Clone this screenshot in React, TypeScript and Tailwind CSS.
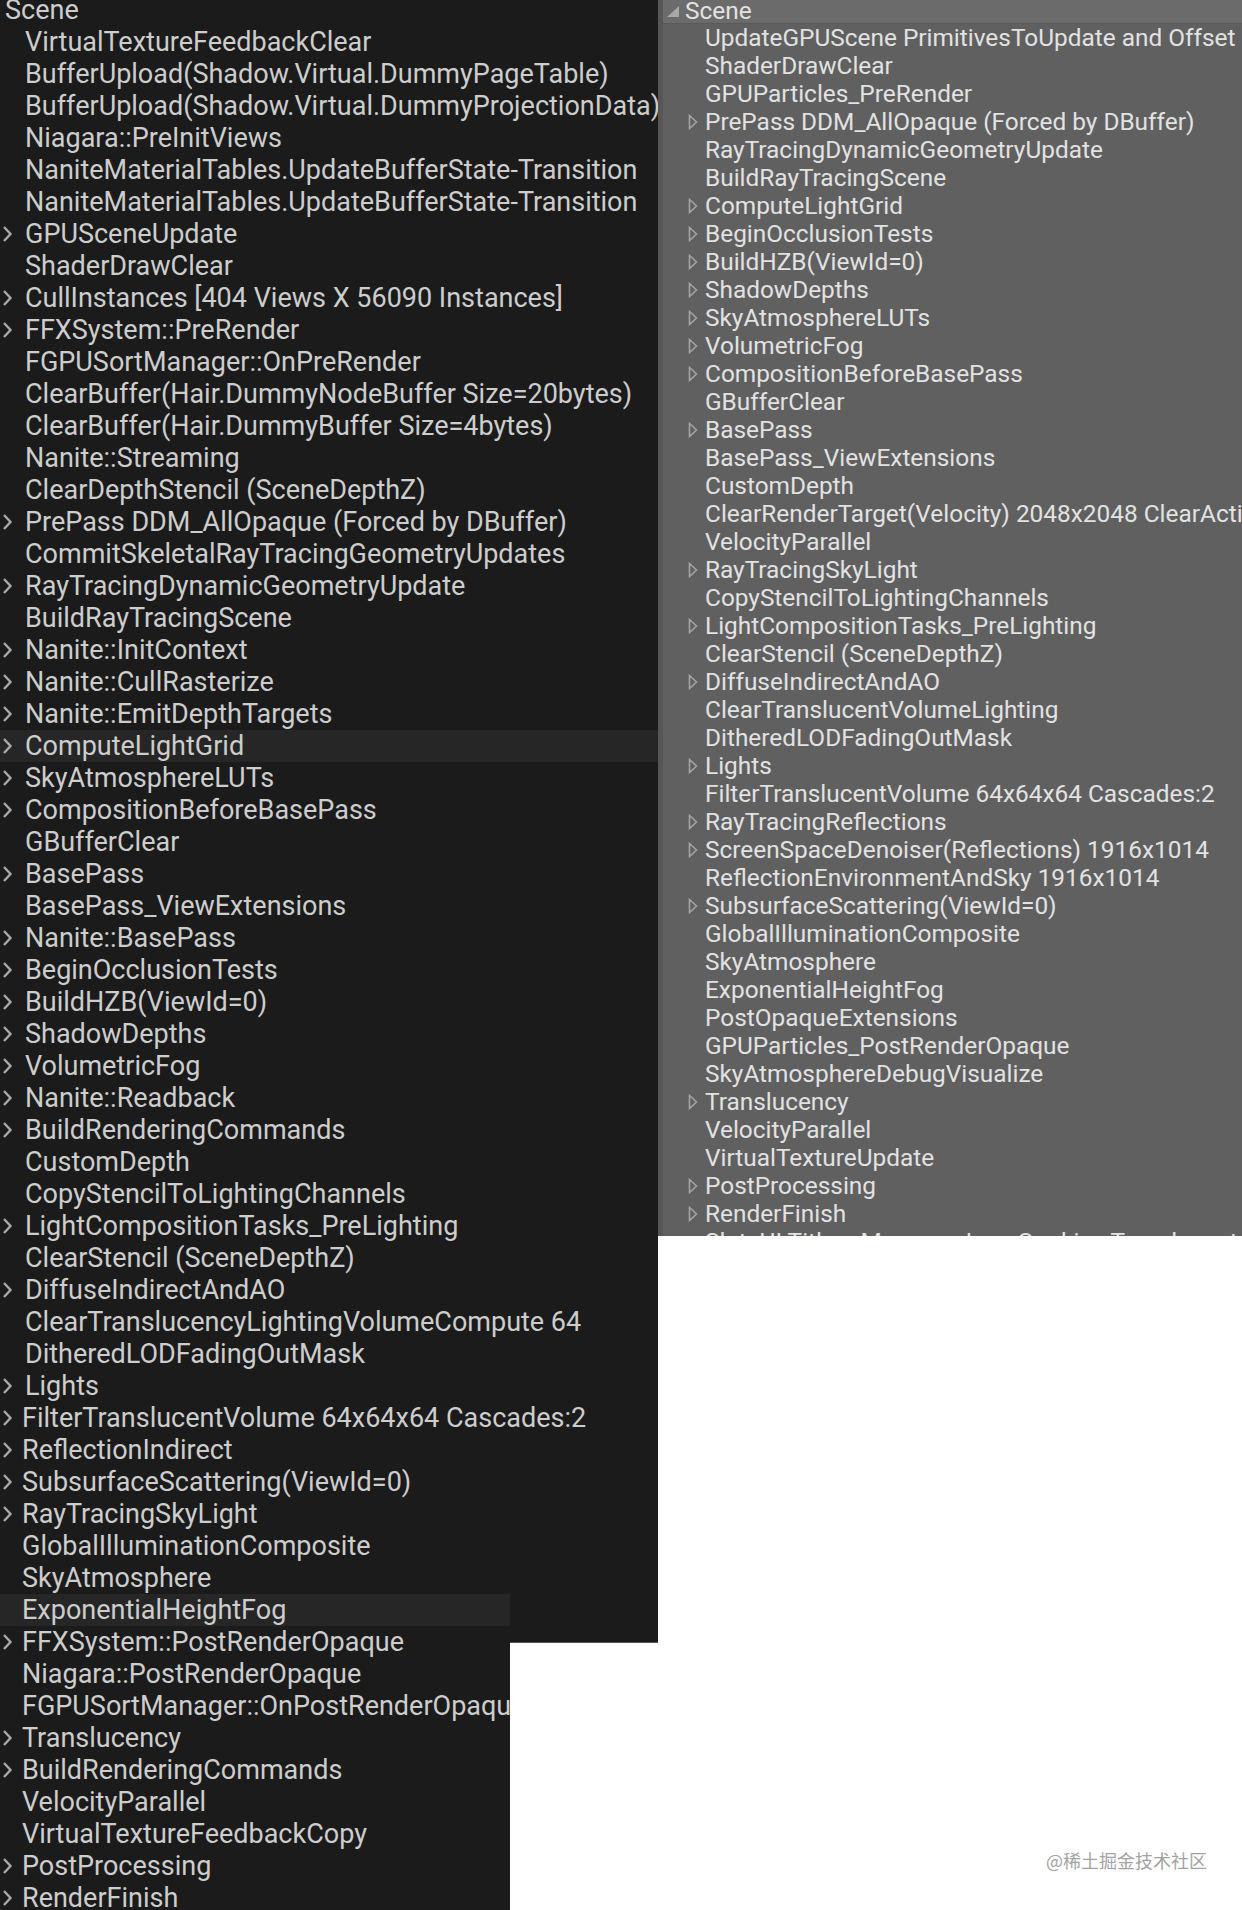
import React from "react";

type Row = { label: string; expand?: boolean };

const leftRows: Row[] = [
  { label: "VirtualTextureFeedbackClear" },
  { label: "BufferUpload(Shadow.Virtual.DummyPageTable)" },
  { label: "BufferUpload(Shadow.Virtual.DummyProjectionData)" },
  { label: "Niagara::PreInitViews" },
  { label: "NaniteMaterialTables.UpdateBufferState-Transition" },
  { label: "NaniteMaterialTables.UpdateBufferState-Transition" },
  { label: "GPUSceneUpdate", expand: true },
  { label: "ShaderDrawClear" },
  { label: "CullInstances [404 Views X 56090 Instances]", expand: true },
  { label: "FFXSystem::PreRender", expand: true },
  { label: "FGPUSortManager::OnPreRender" },
  { label: "ClearBuffer(Hair.DummyNodeBuffer Size=20bytes)" },
  { label: "ClearBuffer(Hair.DummyBuffer Size=4bytes)" },
  { label: "Nanite::Streaming" },
  { label: "ClearDepthStencil (SceneDepthZ)" },
  { label: "PrePass DDM_AllOpaque (Forced by DBuffer)", expand: true },
  { label: "CommitSkeletalRayTracingGeometryUpdates" },
  { label: "RayTracingDynamicGeometryUpdate", expand: true },
  { label: "BuildRayTracingScene" },
  { label: "Nanite::InitContext", expand: true },
  { label: "Nanite::CullRasterize", expand: true },
  { label: "Nanite::EmitDepthTargets", expand: true },
  { label: "ComputeLightGrid", expand: true },
  { label: "SkyAtmosphereLUTs", expand: true },
  { label: "CompositionBeforeBasePass", expand: true },
  { label: "GBufferClear" },
  { label: "BasePass", expand: true },
  { label: "BasePass_ViewExtensions" },
  { label: "Nanite::BasePass", expand: true },
  { label: "BeginOcclusionTests", expand: true },
  { label: "BuildHZB(ViewId=0)", expand: true },
  { label: "ShadowDepths", expand: true },
  { label: "VolumetricFog", expand: true },
  { label: "Nanite::Readback", expand: true },
  { label: "BuildRenderingCommands", expand: true },
  { label: "CustomDepth" },
  { label: "CopyStencilToLightingChannels" },
  { label: "LightCompositionTasks_PreLighting", expand: true },
  { label: "ClearStencil (SceneDepthZ)" },
  { label: "DiffuseIndirectAndAO", expand: true },
  { label: "ClearTranslucencyLightingVolumeCompute 64" },
  { label: "DitheredLODFadingOutMask" },
  { label: "Lights", expand: true },
  { label: "FilterTranslucentVolume 64x64x64 Cascades:2", expand: true },
  { label: "ReflectionIndirect", expand: true },
  { label: "SubsurfaceScattering(ViewId=0)", expand: true },
  { label: "RayTracingSkyLight", expand: true },
  { label: "GlobalIlluminationComposite" },
  { label: "SkyAtmosphere" },
];

const leftTail: Row[] = [
  { label: "ExponentialHeightFog" },
  { label: "FFXSystem::PostRenderOpaque", expand: true },
  { label: "Niagara::PostRenderOpaque" },
  { label: "FGPUSortManager::OnPostRenderOpaque" },
  { label: "Translucency", expand: true },
  { label: "BuildRenderingCommands", expand: true },
  { label: "VelocityParallel" },
  { label: "VirtualTextureFeedbackCopy" },
  { label: "PostProcessing", expand: true },
  { label: "RenderFinish", expand: true },
];

const rightRows: Row[] = [
  { label: "UpdateGPUScene PrimitivesToUpdate and Offset" },
  { label: "ShaderDrawClear" },
  { label: "GPUParticles_PreRender" },
  { label: "PrePass DDM_AllOpaque (Forced by DBuffer)", expand: true },
  { label: "RayTracingDynamicGeometryUpdate" },
  { label: "BuildRayTracingScene" },
  { label: "ComputeLightGrid", expand: true },
  { label: "BeginOcclusionTests", expand: true },
  { label: "BuildHZB(ViewId=0)", expand: true },
  { label: "ShadowDepths", expand: true },
  { label: "SkyAtmosphereLUTs", expand: true },
  { label: "VolumetricFog", expand: true },
  { label: "CompositionBeforeBasePass", expand: true },
  { label: "GBufferClear" },
  { label: "BasePass", expand: true },
  { label: "BasePass_ViewExtensions" },
  { label: "CustomDepth" },
  { label: "ClearRenderTarget(Velocity) 2048x2048 ClearAction" },
  { label: "VelocityParallel" },
  { label: "RayTracingSkyLight", expand: true },
  { label: "CopyStencilToLightingChannels" },
  { label: "LightCompositionTasks_PreLighting", expand: true },
  { label: "ClearStencil (SceneDepthZ)" },
  { label: "DiffuseIndirectAndAO", expand: true },
  { label: "ClearTranslucentVolumeLighting" },
  { label: "DitheredLODFadingOutMask" },
  { label: "Lights", expand: true },
  { label: "FilterTranslucentVolume 64x64x64 Cascades:2" },
  { label: "RayTracingReflections", expand: true },
  { label: "ScreenSpaceDenoiser(Reflections) 1916x1014", expand: true },
  { label: "ReflectionEnvironmentAndSky 1916x1014" },
  { label: "SubsurfaceScattering(ViewId=0)", expand: true },
  { label: "GlobalIlluminationComposite" },
  { label: "SkyAtmosphere" },
  { label: "ExponentialHeightFog" },
  { label: "PostOpaqueExtensions" },
  { label: "GPUParticles_PostRenderOpaque" },
  { label: "SkyAtmosphereDebugVisualize" },
  { label: "Translucency", expand: true },
  { label: "VelocityParallel" },
  { label: "VirtualTextureUpdate" },
  { label: "PostProcessing", expand: true },
  { label: "RenderFinish", expand: true },
  { label: "SlateUI Title = Message Log, Cookies Translucent Upscale" },
];

const Chevron = () => (
  <svg width="12" height="18" viewBox="0 0 12 18" className="shrink-0">
    <polyline
      points="3,2 9.5,9 3,16"
      fill="none"
      stroke="#a9a9a9"
      strokeWidth="2.4"
      strokeLinejoin="miter"
    />
  </svg>
);

const HollowTriangle = () => (
  <svg width="10" height="16" viewBox="0 0 10 16" className="shrink-0">
    <polygon
      points="1.5,1.5 8.5,8 1.5,14.5"
      fill="none"
      stroke="#a3a3a3"
      strokeWidth="1.6"
    />
  </svg>
);

const LeftRow: React.FC<{ row: Row; narrow?: boolean; active?: boolean }> = ({
  row,
  narrow,
  active,
}) => (
  <div
    className={`flex h-[32px] items-center whitespace-nowrap overflow-hidden ${
      active ? "bg-[#262626]" : ""
    }`}
  >
    <div className={`flex shrink-0 pl-[1px] ${narrow ? "w-[22px]" : "w-[25px]"}`}>
      {row.expand && <Chevron />}
    </div>
    <span className="text-[27px] leading-none text-[#cdcdcd]">{row.label}</span>
  </div>
);

const RightRow: React.FC<{ row: Row }> = ({ row }) => (
  <div className="flex h-[28px] items-center whitespace-nowrap">
    <div className="flex w-[42px] shrink-0 justify-end pr-[7px]">
      {row.expand && <HollowTriangle />}
    </div>
    <span className="text-[24.4px] leading-none text-[#e2e2e2]">{row.label}</span>
  </div>
);

export default function App() {
  return (
    <div
      className="flex h-[1910px] w-[1242px] overflow-hidden bg-white"
      style={{ fontFamily: "Roboto, 'Noto Sans', sans-serif" }}
    >
      {/* left capture */}
      <div className="w-[658px] shrink-0">
        <div className="-mt-[6px] bg-[#1b1b1b]">
          <div className="flex h-[32px] items-center pl-[5px]">
            <span className="text-[27px] leading-none text-[#cdcdcd]">Scene</span>
          </div>
          {leftRows.map((r, i) => (
            <LeftRow key={i} row={r} narrow={i >= 43} active={r.label === "ComputeLightGrid"} />
          ))}
        </div>
        <div className="flex">
          <div className="w-[510px] shrink-0 overflow-hidden bg-[#1b1b1b]">
            {leftTail.map((r, i) => (
              <LeftRow key={i} row={r} narrow active={i === 0} />
            ))}
          </div>
          <div className="h-[49px] flex-1 border-b border-[#555555] bg-[#1b1b1b]" />
        </div>
      </div>

      {/* right capture */}
      <div className="flex min-w-0 flex-1 flex-col">
        <div className="h-[1236px] overflow-hidden border-l-[5px] border-[#565656] bg-[#606060]">
          <div className="flex h-[24px] items-center border-b border-[#5a5a5a] bg-[#6b6b6b] pl-[3px]">
            <svg width="14" height="12" viewBox="0 0 14 12" className="mr-[5px] shrink-0">
              <polygon points="13,0 13,11 1,11" fill="#a7a7a7" />
            </svg>
            <span className="text-[24.4px] leading-none text-[#e2e2e2]">Scene</span>
          </div>
          {rightRows.map((r, i) => (
            <RightRow key={i} row={r} />
          ))}
        </div>
        <div className="flex flex-1 items-end justify-end pb-[41px] pr-[35px]">
          <span
            className="text-[18px] leading-none text-[#a3a3a3]"
            style={{ fontFamily: "'Noto Sans CJK SC', sans-serif" }}
          >
            @稀土掘金技术社区
          </span>
        </div>
      </div>
    </div>
  );
}
